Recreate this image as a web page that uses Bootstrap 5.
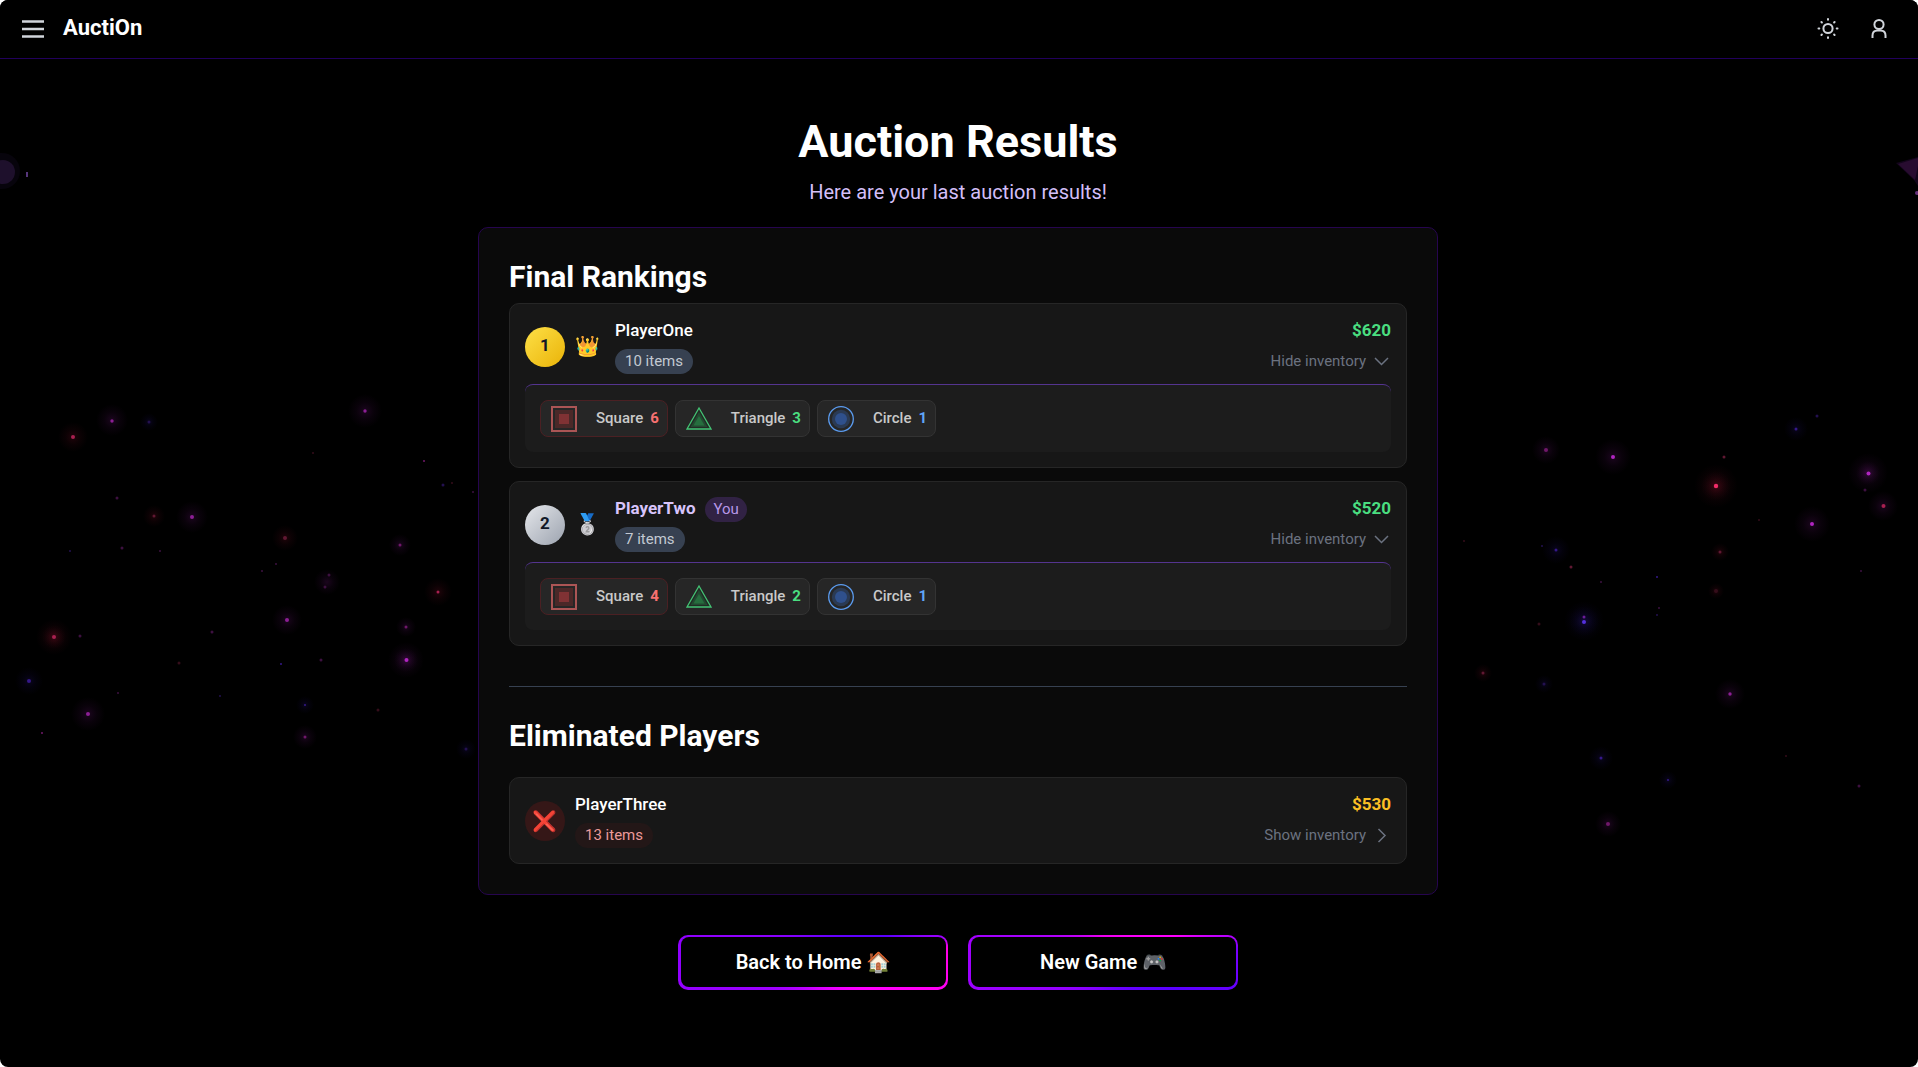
<!DOCTYPE html>
<html lang="en" data-bs-theme="dark">
<head>
<meta charset="utf-8">
<meta name="viewport" content="width=device-width, initial-scale=1">
<title>AuctiOn</title>
<link href="https://cdn.jsdelivr.net/npm/bootstrap@5.3.0/dist/css/bootstrap.min.css" rel="stylesheet">
<style>
html { background: #fff; }
body { background: transparent; font-family: Roboto, "Liberation Sans", "Noto Color Emoji", sans-serif; color: #f9fafb; }
.app-shell { background: #000; border-radius: 8px; overflow: hidden; isolation: isolate; }
.app-bar { background: #000; border-bottom: 1px solid #21005c; padding: 0 27px 0 21px; height: 59px; }
.bar-tools { gap: 26px; }
.icon-btn { color: #d1d5db; background: none; border: 0; padding: 0; line-height: 0; }
.brand-name { font-size: 22px; line-height: 28px; font-weight: 700; color: #fff; text-decoration: none; margin-left: 18px; padding-bottom: 2px; }
.starfield { z-index: -1; }
.page-body { padding: 0 14px 0 12px; }
.page-title { font-size: 45px; line-height: 54px; font-weight: 700; padding-top: 56px; }
.page-sub { font-size: 20px; line-height: 30px; color: #d3bff8; padding: 8px 0 20px; }
.results-panel { max-width: 960px; background: #0a0a0a; border: 1px solid #26054f; border-radius: 10px; padding: 30px; }
.section-title { font-size: 30px; line-height: 38px; font-weight: 700; margin-bottom: 7px; }
.title-spaced { margin-bottom: 22px; }
.section-rule { border-top: 1px solid #374151; opacity: 1; margin: 40px 0 30px; }
.player-list { gap: 13px; }
.player-box { background: #171717; border: 1px solid #262626; border-radius: 10px; padding: 15px; }
.player-head { gap: 10px; }
.rank-disc { width: 40px; height: 40px; border-radius: 50%; font-size: 17px; line-height: 36px; font-weight: 700; color: #111827; }
.rank-gold { background: linear-gradient(135deg, #fde047, #eab308); }
.rank-silver { background: linear-gradient(135deg, #e5e7eb, #9ca3af); }
.rank-out { background: #351717; }
.medal { width: 30px; font-size: 20px; line-height: 25px; }
.cross { font-size: 20px; line-height: 40px; }
.stack-5 { gap: 5px; }
.player-name { font-size: 17px; line-height: 23px; height: 25px; font-weight: 500; color: #fff; }
.name-self { font-weight: 700; color: #d8c4fb; }
.pill { font-size: 15px; line-height: 25px; height: 25px; border-radius: 13px; padding: 0 10px; background: #374151; color: #c3c9d2; }
.pill-you { background: #312244; color: #b797e8; padding: 0 8px; font-weight: 400; }
.pill-out { background: #231717; color: #ec9a9a; }
.money { font-size: 17px; line-height: 23px; height: 25px; font-weight: 700; color: #4ade80; }
.money-out { color: #fbbf24; }
.toggle-btn { font-size: 15px; line-height: 25px; height: 25px; color: #6b7280; background: none; border: 0; padding: 0; gap: 6px; }
.inventory { background: #1c1c1c; border-top: 1px solid #54348f; border-radius: 8px; padding: 15px; margin-top: 10px; gap: 7px; }
.chip { height: 37px; background: #262626; border: 1px solid #333; border-radius: 8px; padding: 0 8px 0 10px; gap: 7px; font-size: 15px; font-weight: 500; color: #c9c9c9; }
.chip svg { margin-right: 12px; }
.chip-red { border-color: #4b2023; }
.count-red { color: #f87171; } .count-green { color: #4ade80; } .count-blue { color: #60a5fa; }
.chip b { font-weight: 700; }
.action-row { gap: 20px; padding: 40px 0 77px; }
.glow-btn { width: 270px; height: 55px; border-radius: 10px; border: 0; padding: 2px 2px 3px 3px; }
.glow-home { background: conic-gradient(from 0deg at 50% 50%, #7400ff, #5a00ff 70deg, #a000ff 79deg, #ff00e6 84deg, #ff00ff 115deg, #a000ff 235deg, #9000ff 270deg, #9000ff 290deg, #7400ff); }
.glow-new { background: conic-gradient(from 0deg at 50% 50%, #f000f0, #ff00ff 70deg, #b000ff 79deg, #7a00ff 84deg, #5a00ff 110deg, #9500ff 240deg, #a400ff 285deg, #f000f0); }
.glow-face { background: #000; border-radius: 8px; font-size: 20px; font-weight: 600; color: #fff; }
</style>
<script src="https://cdn.jsdelivr.net/npm/bootstrap@5.3.0/dist/js/bootstrap.bundle.min.js"></script>
</head>
<body>
<svg width="0" height="0" class="position-absolute" aria-hidden="true">
  <symbol id="ic-square" viewBox="0 0 26 26"><rect x="1" y="1" width="24" height="24" fill="none" stroke="#ab5555" stroke-width="2"/><rect x="4" y="4" width="18" height="18" fill="#4b2828"/><rect x="8" y="8" width="10" height="10" fill="#803234"/></symbol>
  <symbol id="ic-triangle" viewBox="0 0 26 26"><path d="M13 2 25 23H1Z" fill="#222b25" stroke="#43c474" stroke-width="1.3"/><path d="M13 6 21.500 21H4.500Z" fill="#224a31"/><path d="M13 10 18.500 19.500H7.500Z" fill="#266e3e"/></symbol>
  <symbol id="ic-circle" viewBox="0 0 26 26"><circle cx="13" cy="13" r="12.300" fill="none" stroke="#5b9cf0" stroke-width="1.300"/><circle cx="13" cy="13" r="9.200" fill="#2a3a54"/><circle cx="13" cy="13" r="6" fill="#2f508c"/></symbol>
  <symbol id="ic-down" viewBox="0 0 19 19"><path d="m3 6 6.500 6.500L16 6" fill="none" stroke="currentColor" stroke-width="1.500"/></symbol>
  <symbol id="ic-right" viewBox="0 0 19 19"><path d="m6.500 3 6.500 6.500L6.500 16" fill="none" stroke="currentColor" stroke-width="1.500"/></symbol>
</svg>
<div class="app-shell position-relative min-vh-100">
  <svg class="starfield position-absolute top-0 start-0 w-100 h-100" viewBox="0 0 1918 1067" preserveAspectRatio="xMidYMin slice" aria-hidden="true">
    <defs>
      <radialGradient id="g-p"><stop offset="0" stop-color="#c026d3" stop-opacity=".14"/><stop offset=".5" stop-color="#c026d3" stop-opacity=".05"/><stop offset="1" stop-color="#c026d3" stop-opacity="0"/></radialGradient>
      <radialGradient id="g-r"><stop offset="0" stop-color="#e11d48" stop-opacity=".14"/><stop offset=".5" stop-color="#e11d48" stop-opacity=".05"/><stop offset="1" stop-color="#e11d48" stop-opacity="0"/></radialGradient>
      <radialGradient id="g-b"><stop offset="0" stop-color="#4f2be8" stop-opacity=".13"/><stop offset=".5" stop-color="#3b1fd0" stop-opacity=".05"/><stop offset="1" stop-color="#3b1fd0" stop-opacity="0"/></radialGradient>
    </defs>
    <circle cx="2" cy="171" r="18" fill="#07040c"/><circle cx="3" cy="172" r="12" fill="#1e102c"/><rect x="26" y="172" width="2" height="5" fill="#56367a"/>
    <path d="M1896 163 1918 157V186L1914 180Z" fill="#12051a"/><path d="M1898 164 1918 158V166L1915 180Z" fill="#280c30"/><circle cx="1917" cy="193" r="2" fill="#65307a"/>
    <g fill="url(#g-p)"><circle cx="112" cy="420" r="16"/><circle cx="365" cy="411" r="17"/><circle cx="192" cy="517" r="16"/><circle cx="287" cy="620" r="15"/><circle cx="406" cy="660" r="18"/><circle cx="406" cy="660" r="12"/><circle cx="400" cy="545" r="11"/><circle cx="88" cy="714" r="17"/><circle cx="305" cy="737" r="12"/><circle cx="406" cy="627" r="10"/><circle cx="1546" cy="450" r="14"/><circle cx="1613" cy="457" r="18"/><circle cx="1868" cy="473" r="20"/><circle cx="1868" cy="473" r="12"/><circle cx="1812" cy="524" r="18"/><circle cx="1730" cy="694" r="15"/><circle cx="1608" cy="824" r="13"/><circle cx="1883" cy="506" r="15"/><circle cx="327" cy="582" r="13"/></g>
    <g fill="url(#g-r)"><circle cx="73" cy="437" r="15"/><circle cx="54" cy="637" r="18"/><circle cx="54" cy="637" r="12"/><circle cx="154" cy="516" r="11"/><circle cx="285" cy="538" r="13"/><circle cx="438" cy="592" r="14"/><circle cx="1716" cy="486" r="22"/><circle cx="1716" cy="486" r="15"/><circle cx="1720" cy="552" r="9"/><circle cx="1483" cy="673" r="9"/><circle cx="1716" cy="591" r="8"/></g>
    <g fill="url(#g-b)"><circle cx="29" cy="681" r="14"/><circle cx="149" cy="422" r="9"/><circle cx="305" cy="705" r="9"/><circle cx="1584" cy="621" r="20"/><circle cx="1584" cy="621" r="15"/><circle cx="1796" cy="429" r="12"/><circle cx="1556" cy="550" r="14"/><circle cx="1544" cy="684" r="9"/><circle cx="1601" cy="758" r="12"/><circle cx="1668" cy="780" r="9"/><circle cx="466" cy="749" r="10"/></g>
    <g fill="#8c1f94"><circle cx="112" cy="421" r="1.700"/><circle cx="365" cy="411" r="1.700"/><circle cx="192" cy="517" r="2"/><circle cx="287" cy="620" r="2"/><circle cx="88" cy="714" r="2"/><circle cx="1730" cy="694" r="1.700"/></g>
    <g fill="#b025c0"><circle cx="406.500" cy="660" r="2"/><circle cx="1868.500" cy="473.500" r="2"/><circle cx="1613" cy="457" r="2"/><circle cx="1812" cy="524" r="2"/></g>
    <g fill="#70186a"><circle cx="400" cy="545" r="1.500"/><circle cx="305" cy="737" r="1.500"/><circle cx="1546" cy="450" r="2"/><circle cx="1608" cy="824" r="2"/><circle cx="42" cy="733" r="1"/><circle cx="424" cy="461" r="1"/><circle cx="406" cy="627" r="1.500"/></g>
    <g fill="#3d1040"><circle cx="80" cy="636" r="1.500"/><circle cx="122" cy="548" r="1.500"/><circle cx="117" cy="498" r="1.500"/><circle cx="160" cy="551" r="1"/><circle cx="212" cy="632" r="1.500"/><circle cx="321" cy="660" r="1.500"/><circle cx="325" cy="587" r="1.500"/><circle cx="329" cy="575" r="1.500"/><circle cx="262" cy="571" r="1"/><circle cx="276" cy="564" r="1"/><circle cx="118" cy="693" r="1"/><circle cx="473" cy="492" r="1"/><circle cx="1865" cy="490" r="1.500"/><circle cx="1601" cy="582" r="1"/><circle cx="1659" cy="608" r="1"/><circle cx="1859" cy="786" r="1.500"/><circle cx="1861" cy="571" r="1"/></g>
    <g fill="#a82050"><circle cx="73" cy="437" r="2"/><circle cx="54" cy="637" r="2"/><circle cx="438" cy="592" r="1.500"/><circle cx="1883.500" cy="506" r="2"/></g><circle cx="1716" cy="486" r="2.200" fill="#f02c68"/>
    <g fill="#601832"><circle cx="154" cy="516" r="1.500"/><circle cx="285" cy="538" r="2"/><circle cx="1720" cy="552" r="1.500"/><circle cx="1483" cy="673" r="1.500"/><circle cx="1571" cy="567" r="1.500"/><circle cx="1724" cy="457" r="1.500"/></g>
    <g fill="#350d1a"><circle cx="313" cy="453" r="1"/><circle cx="179" cy="663" r="1.500"/><circle cx="378" cy="710" r="1.500"/><circle cx="452" cy="483" r="1"/><circle cx="1464" cy="541" r="1"/><circle cx="1759" cy="520" r="1"/><circle cx="1539" cy="624" r="1.500"/><circle cx="1716" cy="591" r="2"/><circle cx="1786" cy="756" r="1"/></g>
    <g fill="#35188a"><circle cx="29" cy="681" r="2"/><circle cx="281" cy="664" r="1"/><circle cx="305" cy="705" r="1"/><circle cx="1796" cy="429" r="1.500"/><circle cx="1556" cy="550" r="1.500"/><circle cx="1601" cy="758" r="1.500"/><circle cx="1657" cy="577" r="1"/><circle cx="1668" cy="780" r="1"/></g>
    <g fill="#231050"><circle cx="149" cy="422" r="1.500"/><circle cx="443" cy="485" r="1.500"/><circle cx="466" cy="749" r="1.500"/><circle cx="1542" cy="546" r="1"/><circle cx="1544" cy="684" r="1.500"/><circle cx="1817" cy="416" r="1.500"/><circle cx="70" cy="551" r="1"/><circle cx="220" cy="696" r="1"/><circle cx="1657" cy="615" r="1"/></g>
    <circle cx="1584" cy="617" r="1.500" fill="#6a1c98"/><circle cx="1584" cy="622" r="2" fill="#5430dc"/>
  </svg>

  <header class="app-bar d-flex align-items-center">
    <button class="icon-btn" type="button" aria-label="Menu"><svg width="24" height="24" viewBox="0 0 24 24" fill="none" stroke="currentColor" stroke-width="2.400"><path d="M1 4.500h22M1 12h22M1 19.500h22"/></svg></button>
    <a class="brand-name" href="#">AuctiOn</a>
    <div class="bar-tools d-flex align-items-center ms-auto">
      <button class="icon-btn" type="button" aria-label="Toggle theme"><svg width="26" height="24" viewBox="0 0 26 24" fill="none" stroke="currentColor" stroke-width="2" stroke-linecap="round"><circle cx="13" cy="11.500" r="4.600"/><path d="M13 2v.8M13 20.200v.8M3.500 11.500h.8M21.700 11.500h.8M6.400 5l.5.500M19.100 17.500l.5.500M6.400 18l.5-.5M19.100 5.500l.5-.5"/></svg></button>
      <button class="icon-btn" type="button" aria-label="Profile"><svg width="24" height="24" viewBox="0 0 24 24" fill="none" stroke="currentColor" stroke-width="2"><circle cx="12" cy="7.500" r="4.600"/><path d="M5.500 21v-2.500q0-5 5-5h3q5 0 5 5V21"/></svg></button>
    </div>
  </header>

  <main class="page-body d-flex flex-column align-items-center">
    <h1 class="page-title mb-0 text-center">Auction Results</h1>
    <p class="page-sub mb-0 text-center">Here are your last auction results!</p>

    <section class="results-panel w-100">
      <h2 class="section-title">Final Rankings</h2>
      <div class="player-list d-flex flex-column">
        <article class="player-box">
          <div class="player-head d-flex align-items-center">
            <div class="rank-disc rank-gold text-center">1</div>
            <div class="medal">👑</div>
            <div class="stack-5 d-flex flex-column align-items-start">
              <div class="player-name">PlayerOne</div>
              <span class="pill">10 items</span>
            </div>
            <div class="stack-5 d-flex flex-column align-items-end ms-auto">
              <span class="money">$620</span>
              <button class="toggle-btn d-flex align-items-center" type="button" aria-expanded="true">Hide inventory<svg width="19" height="19" aria-hidden="true"><use href="#ic-down"/></svg></button>
            </div>
          </div>
          <div class="inventory d-flex flex-wrap">
            <div class="chip chip-red d-flex align-items-center"><svg width="26" height="26"><use href="#ic-square"/></svg><span>Square</span><b class="count-red">6</b></div>
            <div class="chip d-flex align-items-center"><svg width="26" height="26"><use href="#ic-triangle"/></svg><span>Triangle</span><b class="count-green">3</b></div>
            <div class="chip d-flex align-items-center"><svg width="26" height="26"><use href="#ic-circle"/></svg><span>Circle</span><b class="count-blue">1</b></div>
          </div>
        </article>
        <article class="player-box">
          <div class="player-head d-flex align-items-center">
            <div class="rank-disc rank-silver text-center">2</div>
            <div class="medal">🥈</div>
            <div class="stack-5 d-flex flex-column align-items-start">
              <div class="player-head player-name d-flex"><span class="name-self">PlayerTwo</span><span class="pill pill-you">You</span></div>
              <span class="pill">7 items</span>
            </div>
            <div class="stack-5 d-flex flex-column align-items-end ms-auto">
              <span class="money">$520</span>
              <button class="toggle-btn d-flex align-items-center" type="button" aria-expanded="true">Hide inventory<svg width="19" height="19" aria-hidden="true"><use href="#ic-down"/></svg></button>
            </div>
          </div>
          <div class="inventory d-flex flex-wrap">
            <div class="chip chip-red d-flex align-items-center"><svg width="26" height="26"><use href="#ic-square"/></svg><span>Square</span><b class="count-red">4</b></div>
            <div class="chip d-flex align-items-center"><svg width="26" height="26"><use href="#ic-triangle"/></svg><span>Triangle</span><b class="count-green">2</b></div>
            <div class="chip d-flex align-items-center"><svg width="26" height="26"><use href="#ic-circle"/></svg><span>Circle</span><b class="count-blue">1</b></div>
          </div>
        </article>
      </div>

      <hr class="section-rule">

      <h2 class="section-title title-spaced">Eliminated Players</h2>
      <article class="player-box">
        <div class="player-head d-flex align-items-center">
          <div class="rank-disc rank-out d-flex justify-content-center"><span class="cross">❌</span></div>
          <div class="stack-5 d-flex flex-column align-items-start">
            <div class="player-name">PlayerThree</div>
            <span class="pill pill-out">13 items</span>
          </div>
          <div class="stack-5 d-flex flex-column align-items-end ms-auto">
            <span class="money money-out">$530</span>
            <button class="toggle-btn d-flex align-items-center" type="button" aria-expanded="false">Show inventory<svg width="19" height="19" aria-hidden="true"><use href="#ic-right"/></svg></button>
          </div>
        </div>
      </article>
    </section>

    <div class="action-row d-flex flex-wrap justify-content-center">
      <button class="glow-btn glow-home d-flex" type="button"><span class="glow-face w-100 h-100 d-flex align-items-center justify-content-center">Back to Home 🏠</span></button>
      <button class="glow-btn glow-new d-flex" type="button"><span class="glow-face w-100 h-100 d-flex align-items-center justify-content-center">New Game 🎮</span></button>
    </div>
  </main>
</div>
</body>
</html>
